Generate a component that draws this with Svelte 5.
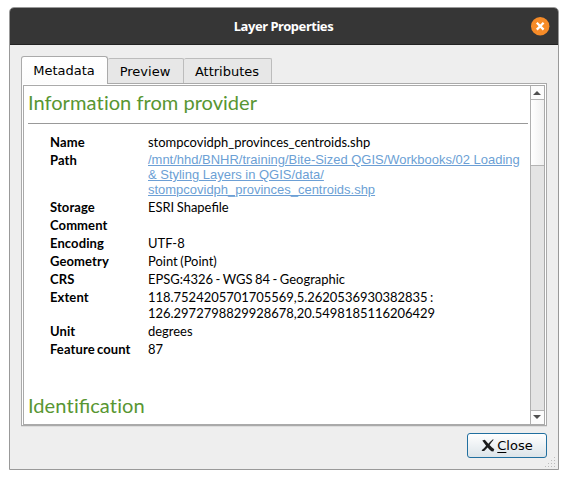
<script>
  const tabs = ['Metadata', 'Preview', 'Attributes'];
  const rows = [
    { label: 'Name', lines: ['stompcovidph_provinces_centroids.shp'] },
    {
      label: 'Path',
      link: true,
      lines: [
        '/mnt/hhd/BNHR/training/Bite-Sized QGIS/Workbooks/02 Loading',
        '& Styling Layers in QGIS/data/',
        'stompcovidph_provinces_centroids.shp'
      ]
    },
    { label: 'Storage', lines: ['ESRI Shapefile'] },
    { label: 'Comment', lines: [''] },
    { label: 'Encoding', lines: ['UTF-8'] },
    { label: 'Geometry', lines: ['Point (Point)'] },
    { label: 'CRS', lines: ['EPSG:4326 - WGS 84 - Geographic'] },
    { label: 'Extent', lines: ['118.7524205701705569,5.2620536930382835 :', '126.2972798829928678,20.5498185116206429'] },
    { label: 'Unit', lines: ['degrees'] },
    { label: 'Feature count', lines: ['87'] }
  ];
  let active = $state(0);
</script>

<main>
  <section class="window">
    <header>
      <h1>Layer Properties</h1>
      <button class="x" aria-label="Close window">
        <svg width="19" height="19" viewBox="0 0 19 19">
          <circle cx="9.2" cy="9.2" r="9.2" fill="#f68b28" />
          <path d="M5.8 5.8l6.8 6.8M12.6 5.8l-6.8 6.8" stroke="#fff" stroke-width="2.3" />
        </svg>
      </button>
    </header>
    <div class="body">
      <nav>
        {#each tabs as tab, i}
          <button class="tab" class:active={active === i} onclick={() => (active = i)}>{tab}</button>
        {/each}
      </nav>
      <div class="panel">
        <div class="view">
          <article>
            <h2>Informa<i>t</i>ion from provider</h2>
            <hr />
            <dl>
              {#each rows as row}
                <div class="row">
                  <dt>{row.label}</dt>
                  <dd class:link={row.link}>
                    {#each row.lines as line}<div><span>{line}</span></div>{/each}
                  </dd>
                </div>
              {/each}
            </dl>
            <h2>Iden<i>t</i>ifica<i>t</i>ion</h2>
          </article>
          <div class="scroll">
            <div class="arrow up"><svg width="8" height="4" viewBox="0 0 8 4"><path d="M0 4L4 0l4 4z" fill="#505050" /></svg></div>
            <div class="thumb"></div>
            <div class="track"></div>
            <div class="arrow down"><svg width="8" height="4" viewBox="0 0 8 4"><path d="M0 0L4 4l4-4z" fill="#505050" /></svg></div>
          </div>
        </div>
      </div>
      <footer>
        <button class="close">
          <svg width="14" height="13" viewBox="0 0 14 13">
            <path d="M1.3 1.4L3.8.7C5 1.8 6.2 3.4 7.3 4.7 8.6 3.2 10.2 1.6 12 .3l.6.5C11 2.6 9.6 4.4 8.6 6.1c1.4 1.5 2.9 3 4.7 4.2l-.9 2.1-2-.2C8.9 11 7.7 9.6 6.6 8.4 5.5 9.5 4.4 10.7 3.2 11.9l-2 .2-.6-.9C2.3 10 3.8 8.3 5.1 6.7 3.9 5 2.7 3.2 1.3 1.4z" fill="#1c1c1c" />
          </svg>
          <span><u>C</u>lose</span>
        </button>
      </footer>
    </div>
    <svg class="grip" width="12" height="12" viewBox="0 0 12 12" fill="#bcbcbc">
      <path d="M9 0h1v1h-1zM6 3h1v1h-1zM9 3h1v1h-1zM3 6h1v1h-1zM6 6h1v1h-1zM9 6h1v1h-1zM0 9h1v1h-1zM3 9h1v1h-1zM6 9h1v1h-1zM9 9h1v1h-1z" />
    </svg>
  </section>
</main>

<style>
  :global(body) { margin: 0; background: #fff; }
  main { box-sizing: border-box; width: 568px; height: 479px; padding: 7px 9px 9px; overflow: hidden; }
  .window { position: relative; box-sizing: border-box; width: 550px; height: 463px; border: 1px solid #999; border-radius: 5px 5px 0 0; background: #eee; overflow: hidden; }
  header { box-sizing: border-box; height: 37px; background: #363636; border-bottom: 1px solid #222; display: flex; align-items: center; justify-content: flex-end; padding-right: 8px; }
  h1 { flex: 1; margin: 0 0 0 26px; text-align: center; color: #fff; font: bold 13px/18px "Noto Sans", sans-serif; letter-spacing: -0.46px; }
  button { padding: 0; margin: 0; font: 13px/16px "DejaVu Sans", sans-serif; color: #000; }
  .x { width: 19px; height: 19px; border: 0; background: none; display: flex; }
  .body { padding: 11px 11px 0; }
  nav { display: flex; align-items: flex-end; height: 27px; }
  .tab { box-sizing: border-box; height: 25px; width: 76px; padding: 2px 1px 0 0; border: 1px solid #bcbcbc; border-left: 0; border-bottom: 0; border-radius: 2px 2px 0 0; background: #e7e7e7; }
  .tab:last-child { width: 88px; }
  .tab.active { position: relative; z-index: 1; width: 87px; height: 28px; padding: 0 1px 0 0; margin-bottom: -1px; border: 1px solid #aaa; border-bottom: 0; border-radius: 3px 3px 0 0; background: linear-gradient(#fff, #fcfcfc); }
  .panel { box-sizing: border-box; width: 526px; height: 343px; border: 1px solid #aaa; background: #fff; padding: 1px; box-shadow: 0 1px #ddd; }
  .view { box-sizing: border-box; width: 522px; height: 340px; border: 1px solid #aaa; display: flex; }
  article { box-sizing: border-box; width: 506px; height: 338px; padding: 4px 2px 0 4px; overflow: hidden; font: 13px/16px Lato, sans-serif; color: #000; }
  h2 { margin: 0; color: #589632; font: 20.08px/24px Lato, sans-serif; }
  h2 i { font-style: normal; letter-spacing: 0.3px; }
  hr { margin: 9px 0 0; border: 0; height: 1px; background: #999; }
  dl { margin: 10px 0 36px 22px; display: flex; flex-direction: column; gap: 2px; }
  .row { display: flex; }
  dt { flex: 0 0 98px; font-weight: bold; letter-spacing: 0.1px; word-spacing: -1px; white-space: nowrap; }
  dd { margin: 0; white-space: nowrap; font-size: 12.96px; word-spacing: -0.8px; }
  .link { font: 12.97px/15px "Liberation Sans", sans-serif; color: #6c9fd5; word-spacing: 0; }
  .link span { text-decoration: underline; }
  .scroll { box-sizing: border-box; width: 14px; height: 338px; border-left: 1px solid #b0b0b0; display: flex; flex-direction: column; }
  .arrow { display: flex; align-items: center; justify-content: center; box-sizing: border-box; height: 14px; background: #fcfcfc; padding-right: 1px; }
  .up { border-bottom: 1px solid #b4b4b4; }
  .down { border-top: 1px solid #b4b4b4; padding-bottom: 1px; }
  .thumb { height: 66px; border-bottom: 1px solid #b4b4b4; box-sizing: border-box; background: linear-gradient(90deg, #fff, #f0f0f0); }
  .track { flex: 1; background: #e4e4e4; }
  footer { display: flex; justify-content: flex-end; padding-top: 7px; }
  .close { box-sizing: border-box; width: 80px; height: 25px; border: 1px solid #216f9f; border-radius: 3px; background: linear-gradient(#fff, #dce4e9); display: flex; align-items: center; justify-content: center; gap: 2px; }
  u { text-underline-offset: 2px; }
  .grip { position: absolute; right: 1px; bottom: 0; }
</style>
